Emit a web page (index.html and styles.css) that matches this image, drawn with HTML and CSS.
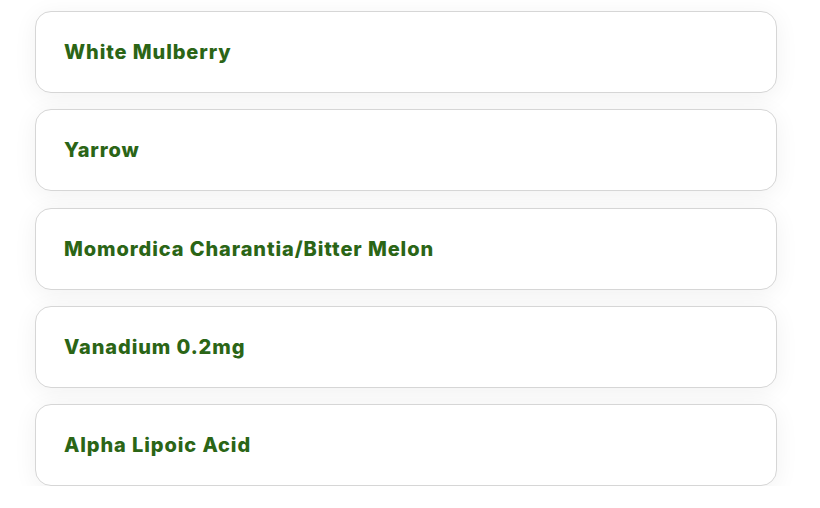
FILE: index.html
```html
<!DOCTYPE html>
<html lang="en">
<head>
  <meta charset="UTF-8">
  <title>Ingredients</title>
  <link rel="stylesheet" href="styles.css">
</head>
<body>
  <div class="list">
    <div class="item">White Mulberry</div>
    <div class="item">Yarrow</div>
    <div class="item">Momordica Charantia/Bitter Melon</div>
    <div class="item">Vanadium 0.2mg</div>
    <div class="item">Alpha Lipoic Acid</div>
  </div>
</body>
</html>
```
FILE: styles.css
```css
body {
  margin: 0;
  background: #fff;
  font-family: Inter, 'Liberation Sans', sans-serif;
}

.list {
  display: flex;
  flex-direction: column;
  gap: 16.25px;
  padding: 11px 43px 0 35px;
}

.item {
  height: 80px;
  display: flex;
  align-items: center;
  padding: 0 28px;
  background: #fff;
  border: 1px solid #d6d6d6;
  border-radius: 16px;
  box-shadow: 0 4px 24px rgba(0,0,0,0.06);
  color: #2b6516;
  font-size: 20px;
  font-weight: 800;
  letter-spacing: 0.9px;
}
```
